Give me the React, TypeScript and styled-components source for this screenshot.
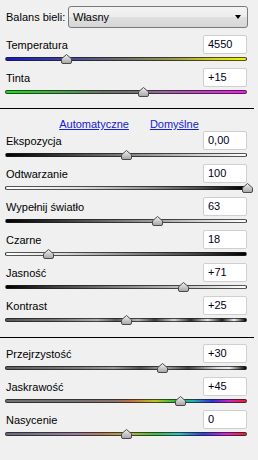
import React from 'react';
import styled, { createGlobalStyle } from 'styled-components';

const GlobalStyle = createGlobalStyle`
  body {
    margin: 0;
    background: #f0f0f0;
    font-family: "Liberation Sans", Arial, sans-serif;
    font-size: 11px;
    color: #000;
  }
`;

const Panel = styled.div`
  width: 258px;
  height: 460px;
  background: #f0f0f0;
  padding-top: 6px;
  box-sizing: border-box;
`;

const HeaderRow = styled.div`
  display: flex;
  align-items: center;
  height: 22px;
  padding: 0 10px 0 6px;
`;

const HeaderLabel = styled.span`
  width: 62px;
`;

const Select = styled.div`
  flex: 1;
  height: 22px;
  box-sizing: border-box;
  display: flex;
  align-items: center;
  justify-content: space-between;
  padding: 0 6px 0 4px;
  border: 1px solid #7a7a7a;
  border-radius: 3px;
  background: linear-gradient(#f4f4f4, #ececec 50%, #e0e0e0 51%, #d6d6d6);
`;

const Arrow = styled.span`
  width: 0;
  height: 0;
  border-left: 3.5px solid transparent;
  border-right: 3.5px solid transparent;
  border-top: 4px solid #000;
`;

const Section = styled.div<{ $top: number }>`
  padding: 0 11px 0 5px;
  margin-top: ${(p) => p.$top}px;
`;

const Separator = styled.div<{ $top: number }>`
  width: 254px;
  height: 1px;
  background: #000;
  margin-top: ${(p) => p.$top}px;
`;

const Links = styled.div`
  display: flex;
  justify-content: center;
  gap: 21px;
  padding: 8px 0 0 0;
  height: 14px;
  line-height: 14px;
`;

const Link = styled.a`
  color: #1420d8;
  text-decoration: underline;
  cursor: pointer;
`;

const Row = styled.div`
  height: 33px;
`;

const RowTop = styled.div`
  display: flex;
  align-items: center;
  justify-content: space-between;
  height: 19px;
`;

const Label = styled.span`
  padding-left: 1px;
`;

const ValueBox = styled.div`
  width: 44px;
  height: 19px;
  box-sizing: border-box;
  border: 1px solid #cfcfcf;
  border-radius: 2px;
  background: #fff;
  padding-left: 4px;
  line-height: 17px;
  color: #000018;
`;

const SliderArea = styled.div`
  position: relative;
  height: 12px;
`;

const Track = styled.div<{ $bg: string }>`
  position: relative;
  top: 3px;
  height: 4px;
  box-sizing: border-box;
  border: 1px solid rgba(30, 30, 30, 0.75);
  border-radius: 3px;
  background: ${(p) => p.$bg};
`;

const ThumbWrap = styled.div`
  position: absolute;
  top: 0;
  width: 11px;
  height: 10px;
  margin-left: -5.5px;

  svg {
    display: block;
  }
`;

const Thumb: React.FC<{ pos: number }> = ({ pos }) => (
  <ThumbWrap style={{ left: `${pos * 100}%` }}>
    <svg width="11" height="10" viewBox="0 0 11 10">
      <defs>
        <linearGradient id="tg" x1="0" y1="0" x2="0" y2="1">
          <stop offset="0" stopColor="#f2f2f2" />
          <stop offset="1" stopColor="#a4a4a4" />
        </linearGradient>
      </defs>
      <path
        d="M5.5 0.5 L10.5 4.8 V8 Q10.5 9.5 9 9.5 H2 Q0.5 9.5 0.5 8 V4.8 Z"
        fill="url(#tg)"
        stroke="#4a4a4a"
        strokeWidth="1"
      />
    </svg>
  </ThumbWrap>
);

type SliderDef = { label: string; value: string; pos: number; bg: string };

const g = (s: string) => `linear-gradient(90deg, ${s})`;

const first: SliderDef[] = [
  { label: 'Temperatura', value: '4550', pos: 0.256, bg: g('#1818c8 0%, #3a3aa8 20%, #606078 40%, #707070 50%, #9a9a50 70%, #d8d820 88%, #f4f400 100%') },
  { label: 'Tinta', value: '+15', pos: 0.574, bg: g('#18e018 0%, #40b040 20%, #687868 40%, #707070 50%, #986898 65%, #d038d0 85%, #f818f8 100%') },
];

const second: SliderDef[] = [
  { label: 'Ekspozycja', value: '0,00', pos: 0.5, bg: g('#000 0%, #303030 20%, #808080 50%, #d0d0d0 80%, #fff 100%') },
  { label: 'Odtwarzanie', value: '100', pos: 1, bg: g('#fff 0%, #e0e0e0 30%, #a0a0a0 55%, #505050 80%, #000 100%') },
  { label: 'Wypełnij światło', value: '63', pos: 0.63, bg: g('#000 0%, #303030 20%, #808080 50%, #d0d0d0 80%, #fff 100%') },
  { label: 'Czarne', value: '18', pos: 0.18, bg: g('#fff 0%, #d8d8d8 25%, #909090 50%, #404040 80%, #000 100%') },
  { label: 'Jasność', value: '+71', pos: 0.737, bg: g('#000 0%, #404040 20%, #8a8a8a 50%, #d0d0d0 80%, #fff 100%') },
  { label: 'Kontrast', value: '+25', pos: 0.5, bg: g('#585858 0%, #767676 20%, #a8a8a8 38%, #5a5a5a 46%, #b4b4b4 55%, #3c3c3c 62%, #d0d0d0 70%, #303030 77%, #e0e0e0 84%, #202020 90%, #f0f0f0 95%, #000 100%') },
];

const third: SliderDef[] = [
  { label: 'Przejrzystość', value: '+30', pos: 0.65, bg: g('#606060 0%, #7c7c7c 30%, #9a9a9a 45%, #505050 56%, #a8a8a8 66%, #404040 76%, #d8d8d8 88%, #f0f0f0 93%, #000 100%') },
  { label: 'Jaskrawość', value: '+45', pos: 0.725, bg: g('#707070 0%, #747470 30%, #8a7070 45%, #c07040 52%, #c0c020 62%, #30c030 70%, #20b0c0 78%, #3030e0 86%, #d020d0 93%, #f02020 100%') },
  { label: 'Nasycenie', value: '0', pos: 0.5, bg: g('#6a6a7a 0%, #7a7a90 15%, #9a7aa0 28%, #b08060 40%, #b0b040 52%, #40c040 62%, #30c0c0 72%, #3040e0 82%, #e020e0 92%, #f02020 100%') },
];

const Slider: React.FC<SliderDef> = ({ label, value, pos, bg }) => (
  <Row>
    <RowTop>
      <Label>{label}</Label>
      <ValueBox>{value}</ValueBox>
    </RowTop>
    <SliderArea>
      <Track $bg={bg} />
      <Thumb pos={pos} />
    </SliderArea>
  </Row>
);

const App: React.FC = () => (
  <>
    <GlobalStyle />
    <Panel>
      <HeaderRow>
        <HeaderLabel>Balans bieli:</HeaderLabel>
        <Select>
          <span>Własny</span>
          <Arrow />
        </Select>
      </HeaderRow>
      <Section $top={7}>
        {first.map((s) => <Slider key={s.label} {...s} />)}
      </Section>
      <Separator $top={7} />
      <Links>
        <Link>Automatyczne</Link>
        <Link>Domyślne</Link>
      </Links>
      <Section $top={0}>
        {second.map((s) => <Slider key={s.label} {...s} />)}
      </Section>
      <Separator $top={8} />
      <Section $top={6}>
        {third.map((s) => <Slider key={s.label} {...s} />)}
      </Section>
    </Panel>
  </>
);

export default App;
